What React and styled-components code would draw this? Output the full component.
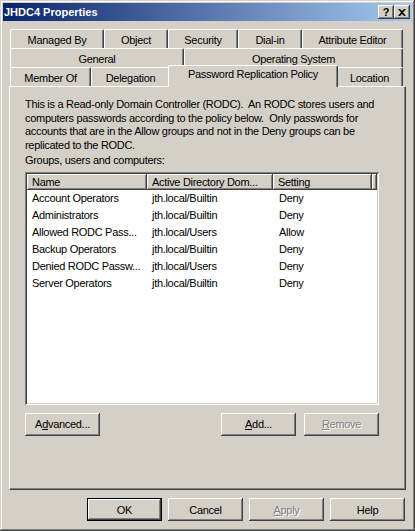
import React from 'react'
import styled, { createGlobalStyle } from 'styled-components'

const GlobalStyle = createGlobalStyle`
  * { box-sizing: border-box; }
  body {
    margin: 0;
    background: #d4d0c8;
    font-family: "Liberation Sans", Arial, sans-serif;
    font-size: 11px;
    letter-spacing: -0.3px;
    color: #000;
  }
`

const tabRows = [
  [
    { label: 'Managed By', width: 94 },
    { label: 'Object', width: 64 },
    { label: 'Security', width: 70 },
    { label: 'Dial-in', width: 64 },
    { label: 'Attribute Editor', width: 101 },
  ],
  [
    { label: 'General', width: 174 },
    { label: 'Operating System', width: 219 },
  ],
  [
    { label: 'Member Of', width: 81 },
    { label: 'Delegation', width: 79 },
    { label: 'Password Replication Policy', width: 166, selected: true },
    { label: 'Location', width: 67 },
  ],
]

const entries = [
  ['Account Operators', 'jth.local/Builtin', 'Deny'],
  ['Administrators', 'jth.local/Builtin', 'Deny'],
  ['Allowed RODC Pass...', 'jth.local/Users', 'Allow'],
  ['Backup Operators', 'jth.local/Builtin', 'Deny'],
  ['Denied RODC Passw...', 'jth.local/Users', 'Deny'],
  ['Server Operators', 'jth.local/Builtin', 'Deny'],
]

const App = () => {
  return (
    <React.Fragment>
      <GlobalStyle />
      <Window>
        <TitleBar>
          <Title>JHDC4 Properties</Title>
          <CaptionButtons>
            <CaptionButton>?</CaptionButton>
            <CaptionButton>
              <svg width="8" height="7" viewBox="0 0 8 7">
                <path d="M0 0h2l2 2 2-2h2L5 3.5 8 7H6L4 5 2 7H0l3-3.5z" fill="#000" />
              </svg>
            </CaptionButton>
          </CaptionButtons>
        </TitleBar>

        <Body>
          <TabStrip>
            {tabRows.map((row, i) => (
              <TabRow key={i}>
                {row.map((tab) => (
                  <Tab key={tab.label} $width={tab.width} $selected={tab.selected}>
                    {tab.label}
                  </Tab>
                ))}
              </TabRow>
            ))}
          </TabStrip>

          <Panel>
            <Description>
              This is a Read-only Domain Controller (RODC).&nbsp; An RODC stores users and<br />
              computers passwords according to the policy below.&nbsp; Only passwords for<br />
              accounts that are in the Allow groups and not in the Deny groups can be<br />
              replicated to the RODC.
            </Description>
            <Label>Groups, users and computers:</Label>

            <List>
              <HeaderRow>
                <HeaderCell>Name</HeaderCell>
                <HeaderCell>Active Directory Dom...</HeaderCell>
                <HeaderCell>Setting</HeaderCell>
                <HeaderCell />
              </HeaderRow>
              {entries.map((e) => (
                <Row key={e[0]}>
                  <Cell>{e[0]}</Cell>
                  <Cell>{e[1]}</Cell>
                  <Cell $pad={6}>{e[2]}</Cell>
                </Row>
              ))}
            </List>

            <ButtonBar>
              <Button>A<u>d</u>vanced...</Button>
              <Spacer />
              <Button><u>A</u>dd...</Button>
              <Button disabled><u>R</u>emove</Button>
            </ButtonBar>
          </Panel>

          <Footer>
            <Button $default>OK</Button>
            <Button>Cancel</Button>
            <Button disabled><u>A</u>pply</Button>
            <Button>Help</Button>
          </Footer>
        </Body>
      </Window>
    </React.Fragment>
  )
}

const Window = styled.div`
  width: 415px;
  height: 531px;
  padding: 3px;
  background: #d4d0c8;
  display: flex;
  flex-direction: column;
  box-shadow: inset -1px -1px #404040, inset 1px 1px #d4d0c8,
    inset -2px -2px #808080, inset 2px 2px #fff;
`

const TitleBar = styled.div`
  height: 18px;
  flex-shrink: 0;
  display: flex;
  align-items: center;
  justify-content: space-between;
  padding: 0 2px 0 1px;
  background: linear-gradient(to right, #0a246a, #a6caf0);
`

const Title = styled.div`
  color: #fff;
  font-weight: bold;
  font-size: 11px;
  letter-spacing: 0;
`

const CaptionButtons = styled.div`
  display: flex;
`

const CaptionButton = styled.div`
  width: 16px;
  height: 14px;
  background: #d4d0c8;
  display: flex;
  align-items: center;
  justify-content: center;
  font-weight: bold;
  font-size: 11px;
  line-height: 1;
  box-shadow: inset -1px -1px #404040, inset 1px 1px #fff,
    inset -2px -2px #808080;
`

const Body = styled.div`
  flex: 1;
  display: flex;
  flex-direction: column;
  padding: 9px 6px 8px 6px;
`

const TabStrip = styled.div`
  display: flex;
  flex-direction: column;
  margin: 0 3px 0 1px;
`

const TabRow = styled.div`
  height: 19px;
  display: flex;
  align-items: flex-end;
  &:first-child {
    height: 18px;
  }
`

const Tab = styled.div`
  width: ${(p) => (p.$selected ? p.$width + 4 : p.$width)}px;
  height: ${(p) => (p.$selected ? 22 : 19)}px;
  margin: ${(p) => (p.$selected ? '0 -2px -1px -2px' : '0')};
  padding-top: ${(p) => (p.$selected ? 2 : 4)}px;
  position: relative;
  z-index: ${(p) => (p.$selected ? 2 : 0)};
  background: #d4d0c8;
  text-align: center;
  white-space: nowrap;
  border-radius: 2px 2px 0 0;
  border-top: 1px solid #fff;
  border-left: 1px solid #fff;
  border-right: 1px solid #404040;
  box-shadow: inset -1px 0 #808080;
`

const Panel = styled.div`
  height: 404px;
  flex-shrink: 0;
  position: relative;
  z-index: 1;
  padding: 11px 26px 0 15px;
  display: flex;
  flex-direction: column;
  border-top: 1px solid #fff;
  border-left: 1px solid #fff;
  border-right: 1px solid #404040;
  border-bottom: 1px solid #404040;
  box-shadow: inset -1px -1px #808080;
`

const Description = styled.div`
  line-height: 13.5px;
  white-space: nowrap;
`

const Label = styled.div`
  line-height: 13.5px;
  margin-top: 2px;
`

const List = styled.div`
  margin-top: 4px;
  height: 233px;
  background: #fff;
  padding: 2px;
  box-shadow: inset 1px 1px #808080, inset -1px -1px #fff,
    inset 2px 2px #404040, inset -2px -2px #d4d0c8;
`

const columns = '120px 126px 99px 1fr'

const HeaderRow = styled.div`
  display: grid;
  grid-template-columns: ${columns};
  height: 16px;
`

const HeaderCell = styled.div`
  background: #d4d0c8;
  padding: 2px 0 0 5px;
  white-space: nowrap;
  overflow: hidden;
  box-shadow: inset -1px -1px #404040, inset 1px 1px #fff,
    inset -2px -2px #808080;
`

const Row = styled.div`
  display: grid;
  grid-template-columns: ${columns};
  height: 17px;
  align-items: center;
`

const Cell = styled.div`
  padding-left: ${(p) => p.$pad || 5}px;
  white-space: nowrap;
`

const ButtonBar = styled.div`
  display: flex;
  gap: 8px;
  margin-top: 8px;
`

const Spacer = styled.div`
  flex: 1;
`

const Button = styled.button`
  width: 75px;
  height: 23px;
  padding: 0;
  font-family: inherit;
  font-size: 11px;
  letter-spacing: -0.3px;
  background: #d4d0c8;
  border: ${(p) => (p.$default ? '1px solid #000' : 'none')};
  color: #000;
  box-shadow: inset -1px -1px #404040, inset 1px 1px #fff,
    inset -2px -2px #808080;
  &:disabled {
    color: #808080;
    text-shadow: 1px 1px #fff;
  }
`

const Footer = styled.div`
  display: flex;
  justify-content: flex-end;
  gap: 6px;
  margin-top: 8px;
  padding-right: 1px;
`

export default App
